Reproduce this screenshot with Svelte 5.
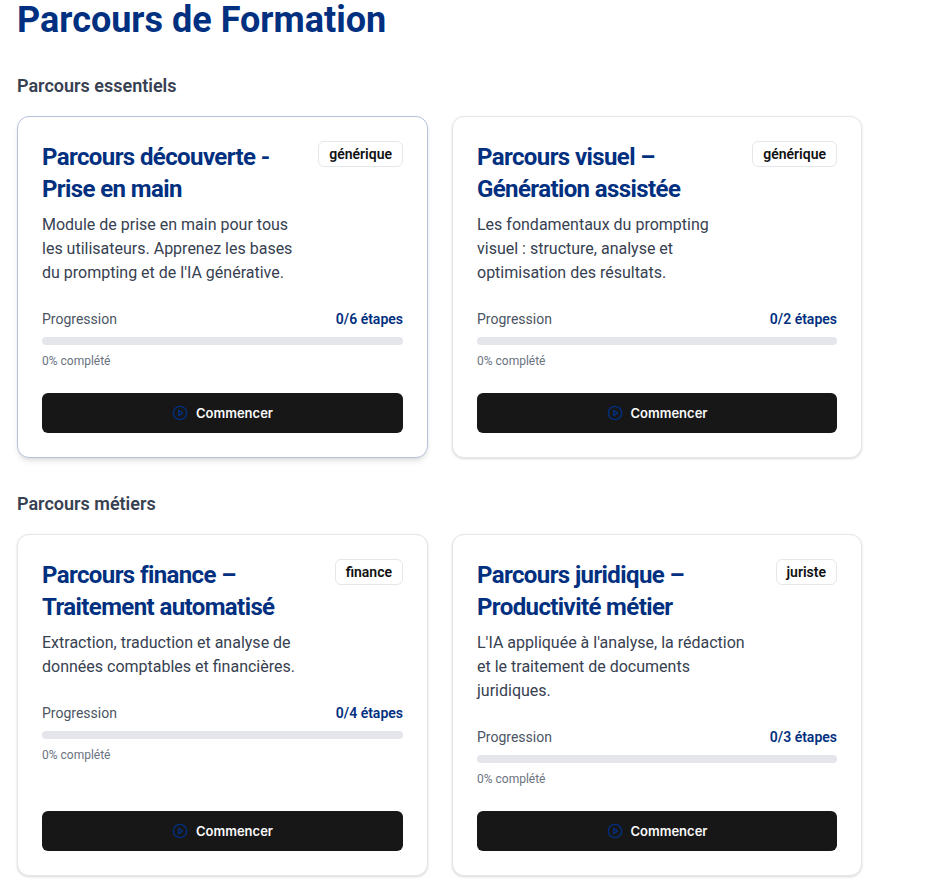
<script>
  const sections = [
    {
      title: 'Parcours essentiels',
      paths: [
        {
          name: 'Parcours découverte - Prise en main',
          tag: 'générique',
          text: "Module de prise en main pour tous les utilisateurs. Apprenez les bases du prompting et de l'IA générative.",
          steps: 6,
          active: true
        },
        {
          name: 'Parcours visuel – Génération assistée',
          tag: 'générique',
          text: 'Les fondamentaux du prompting visuel : structure, analyse et optimisation des résultats.',
          steps: 2
        }
      ]
    },
    {
      title: 'Parcours métiers',
      paths: [
        {
          name: 'Parcours finance – Traitement automatisé',
          tag: 'finance',
          text: 'Extraction, traduction et analyse de données comptables et financières.',
          steps: 4
        },
        {
          name: 'Parcours juridique – Productivité métier',
          tag: 'juriste',
          text: "L'IA appliquée à l'analyse, la rédaction et le traitement de documents juridiques.",
          steps: 3
        }
      ]
    }
  ];
</script>

<main class="page">
  <h1>Parcours de Formation</h1>

  {#each sections as section}
    <section>
      <h2>{section.title}</h2>
      <div class="grid">
        {#each section.paths as path}
          <article class="card" class:active={path.active}>
            <div class="top">
              <div class="info">
                <h3>{path.name}</h3>
                <p>{path.text}</p>
              </div>
              <span class="tag">{path.tag}</span>
            </div>

            <div class="progress">
              <div class="progress-row">
                <span>Progression</span>
                <strong>0/{path.steps} étapes</strong>
              </div>
              <div class="bar"></div>
              <small>0% complété</small>
            </div>

            <button type="button">
              <svg width="16" height="16" viewBox="0 0 24 24" fill="none" stroke="currentColor" stroke-width="2" stroke-linecap="round" stroke-linejoin="round">
                <circle cx="12" cy="12" r="10" />
                <polygon points="10 8 16 12 10 16 10 8" />
              </svg>
              Commencer
            </button>
          </article>
        {/each}
      </div>
    </section>
  {/each}
</main>

<style>
  :global(body) {
    background: #fff;
    font-family: Roboto, "Liberation Sans", sans-serif;
  }
  .page {
    padding: 0 17px;
    width: 845px;
  }
  h1 {
    margin: 0 0 32px;
    font-size: 36px;
    line-height: 40px;
    font-weight: 700;
    color: #023080;
  }
  section {
    margin-bottom: 32px;
  }
  h2 {
    margin: 0 0 16px;
    font-size: 18px;
    line-height: 28px;
    font-weight: 600;
    color: #374151;
  }
  .grid {
    display: grid;
    grid-template-columns: 411px 410px;
    gap: 24px;
  }
  .card {
    display: flex;
    flex-direction: column;
    box-sizing: border-box;
    height: 342px;
    padding: 24px;
    background: #fff;
    border: 1px solid #e5e7eb;
    border-radius: 12px;
    box-shadow: 0 1px 3px rgba(0, 0, 0, 0.1), 0 1px 2px rgba(0, 0, 0, 0.06);
  }
  .card.active {
    border-color: #b6c2dc;
    box-shadow: 0 4px 6px -1px rgba(0, 0, 0, 0.1), 0 2px 4px -2px rgba(0, 0, 0, 0.1);
  }
  .top {
    display: flex;
    justify-content: space-between;
    align-items: flex-start;
    gap: 16px;
    margin-bottom: 24px;
  }
  .info {
    flex: 1;
    min-width: 0;
  }
  h3 {
    margin: 0 0 8px;
    font-size: 24px;
    line-height: 32px;
    font-weight: 700;
    letter-spacing: -0.6px;
    color: #023080;
  }
  p {
    margin: 0;
    font-size: 16px;
    line-height: 24px;
    color: #374151;
  }
  .tag {
    flex-shrink: 0;
    padding: 3px 10px;
    font-size: 14px;
    line-height: 18px;
    font-weight: 600;
    color: #111;
    background: #fff;
    border: 1px solid #e5e7eb;
    border-radius: 6px;
  }
  .progress-row {
    display: flex;
    justify-content: space-between;
    font-size: 14px;
    line-height: 20px;
    color: #4b5563;
  }
  .progress-row strong {
    font-weight: 600;
    color: #023080;
  }
  .bar {
    height: 8px;
    margin: 8px 0;
    background: #e4e6ec;
    border-radius: 999px;
  }
  small {
    display: block;
    font-size: 12px;
    line-height: 16px;
    color: #6b7280;
  }
  button {
    display: flex;
    align-items: center;
    justify-content: center;
    gap: 8px;
    height: 40px;
    margin-top: auto;
    border: none;
    border-radius: 6px;
    background: #171717;
    color: #fafafa;
    font-family: Inter, sans-serif;
    font-size: 13px;
    font-weight: 600;
  }
  button svg {
    color: #023080;
  }
</style>
